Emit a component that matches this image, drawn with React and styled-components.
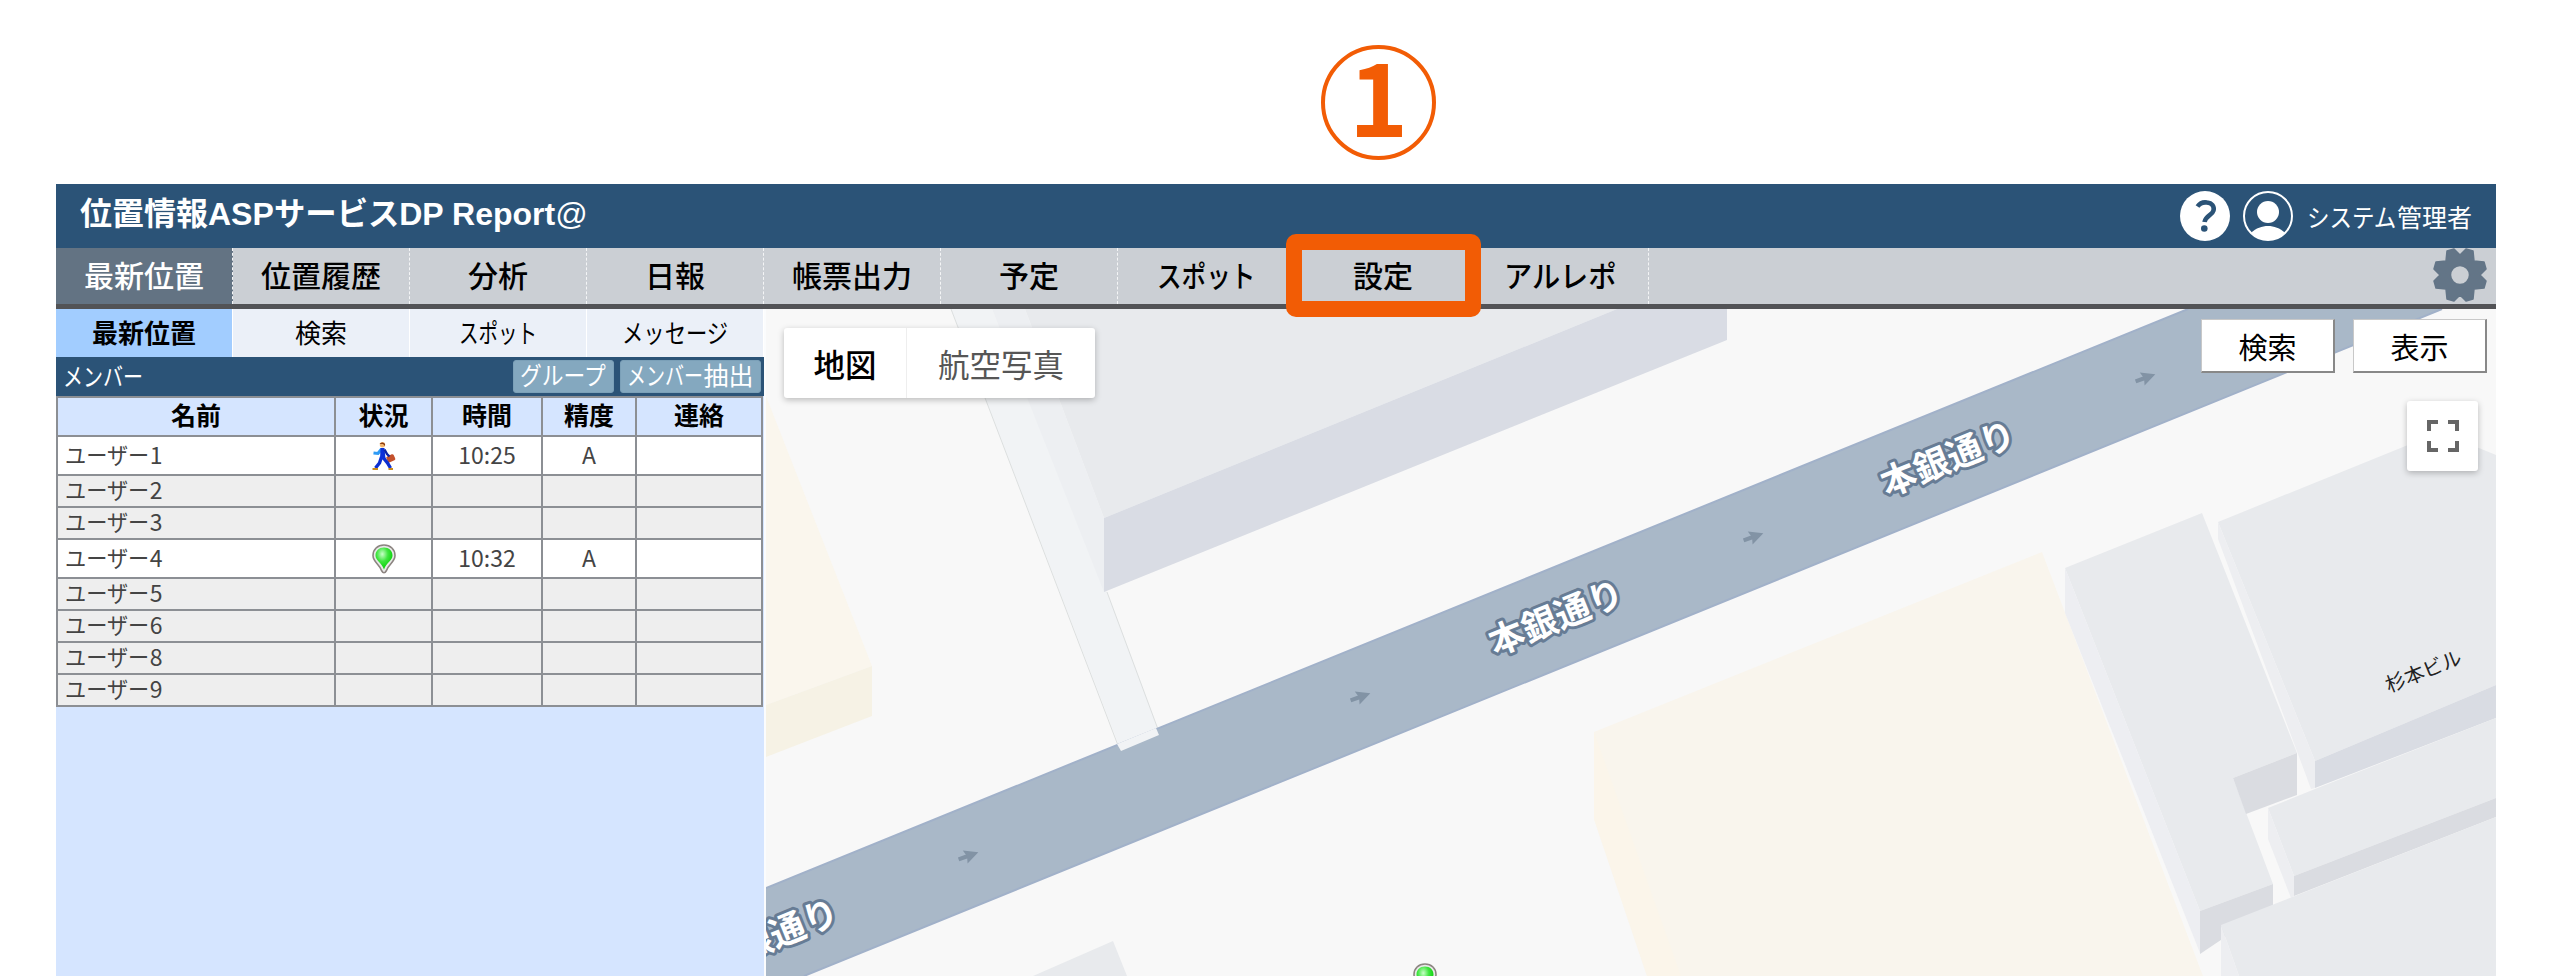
import React from 'react';
import styled, { createGlobalStyle, css } from 'styled-components';

const GlobalStyle = createGlobalStyle`
  * {
    box-sizing: border-box;
  }

  body {
    margin: 0;
    background: #ffffff;
    font-family: 'Noto Sans CJK JP', sans-serif;
    color: #000000;
  }
`;

const Page = styled.div`
  position: relative;
  height: 976px;
  padding: 184px 64px 0 56px;
  overflow: hidden;
`;

const Frame = styled.div`
  display: flex;
  flex-direction: column;
  height: 792px;
`;

const Header = styled.header`
  display: flex;
  align-items: center;
  justify-content: space-between;
  flex: none;
  height: 64px;
  padding: 0 24px;
  background: #2b5377;
  color: #ffffff;
`;

const Title = styled.h1`
  margin: 0 0 4px;
  font-family: 'Liberation Sans', 'Noto Sans CJK JP', sans-serif;
  font-size: 32px;
  font-weight: 700;
  line-height: 1;
`;

const TitleMark = styled.span`
  font-weight: 400;
`;

const Account = styled.div`
  display: flex;
  align-items: center;
  gap: 13px;
  padding-bottom: 1px;
`;

const UserName = styled.span`
  margin-left: 1px;
  padding-top: 2px;
  font-size: 25px;
  line-height: 1;
  white-space: nowrap;
`;

// Proportional kana: the glyphs and the box shrink together
const KanaBox = styled.span`
  display: inline-block;
  width: ${({ $length, $scale }) => $length * $scale}em;
  white-space: nowrap;
`;

const KanaText = styled.span`
  display: inline-block;
  transform: scaleX(${({ $scale }) => $scale});
  transform-origin: left center;
`;

const Kana = ({ scale, children }) => (
  <KanaBox $length={children.length} $scale={scale}>
    <KanaText $scale={scale}>{children}</KanaText>
  </KanaBox>
);

const Nav = styled.nav`
  display: flex;
  flex: none;
  height: 61px;
  background: #cbcfd4;
  border-bottom: 5px solid #525356;
`;

const NavItem = styled.a`
  display: flex;
  align-items: center;
  justify-content: center;
  width: 177px;
  padding-bottom: 4px;
  border-right: 1px dashed #f4f5f6;
  font-size: 30px;
  font-weight: 500;

  ${({ $active }) =>
    $active &&
    css`
      background: #637383;
      color: #ffffff;
    `}
`;

const NavEnd = styled.div`
  display: flex;
  flex: 1;
  justify-content: flex-end;
  padding-right: 9px;
`;

const Body = styled.div`
  display: flex;
  flex: 1;
  min-height: 0;
`;

const Sidebar = styled.aside`
  flex: none;
  width: 708px;
  background: #d5e5ff;
`;

const Tabs = styled.div`
  display: flex;
  height: 48px;
`;

const Tab = styled.a`
  display: flex;
  flex: 1;
  align-items: center;
  justify-content: center;
  padding-bottom: 4px;
  border-right: 1px solid #ffffff;
  background: ${({ $active }) => ($active ? '#a2cdff' : '#ebf0f8')};
  font-size: 26px;
  font-weight: ${({ $active }) => ($active ? 700 : 400)};
`;

const MemberBar = styled.div`
  display: flex;
  align-items: center;
  gap: 6px;
  height: 39px;
  padding: 0 3px 0 7px;
  background: #2b5377;
  color: #ffffff;
  font-size: 25px;
`;

const MemberTitle = styled.span`
  flex: 1;
  padding-bottom: 3px;
  line-height: 1;
`;

const MemberButton = styled.button`
  width: ${({ $width }) => $width}px;
  height: 33px;
  padding: 0 0 4px;
  border: 1px solid #7ba0b8;
  border-radius: 3px;
  background: #84a8bf;
  color: #ffffff;
  font: inherit;
  line-height: 1;
  white-space: nowrap;
`;

const MemberTable = styled.table`
  width: 706px;
  border-collapse: collapse;
  table-layout: fixed;
  font-size: 23px;
  line-height: 1;
`;

const HeadCell = styled.th`
  width: ${({ $width }) => $width}px;
  height: 39px;
  padding: 0 0 4px;
  border: 2px solid #8c8f94;
  background: #d5e5ff;
  font-size: 25px;
  font-weight: 700;
`;

const Row = styled.tr`
  height: ${({ $online }) => ($online ? 39 : 32)}px;
  background: ${({ $online }) => ($online ? '#ffffff' : '#eeeeee')};
`;

const Cell = styled.td`
  padding: 0 0 3px ${({ $name }) => ($name ? 7 : 0)}px;
  border: 2px solid #8c8f94;
  color: #444444;
  text-align: ${({ $name }) => ($name ? 'left' : 'center')};
  vertical-align: middle;

  svg {
    display: block;
    margin: 3px auto 0;
  }
`;

const MapArea = styled.main`
  position: relative;
  flex: 1;
  border-left: 2px solid #fbfcfd;
  background: #f8f8f8;
  overflow: hidden;
`;

const MapCanvas = styled.svg`
  display: block;
`;

const RoadLabel = styled.text`
  fill: #ffffff;
  stroke: #677c95;
  stroke-width: 6px;
  stroke-linejoin: round;
  paint-order: stroke;
  font-size: 35.5px;
  font-weight: 700;
  text-anchor: middle;
  dominant-baseline: central;
`;

const PlaceLabel = styled.text`
  fill: #222222;
  font-size: 20px;
  text-anchor: middle;
  dominant-baseline: central;
`;

const MapControls = styled.div`
  position: absolute;
  inset: 10px 9px auto 18px;
  display: flex;
  align-items: flex-start;
  justify-content: space-between;
`;

const MapTypes = styled.div`
  display: flex;
  height: 70px;
  margin-top: 9px;
  border-radius: 3px;
  background: #ffffff;
  box-shadow: 0 2px 6px rgba(0, 0, 0, 0.25);
`;

const MapType = styled.button`
  width: ${({ $width }) => $width}px;
  padding: 0;
  border: 0;
  border-left: ${({ $active }) => ($active ? '0' : '1px solid #eeeeee')};
  background: none;
  color: ${({ $active }) => ($active ? '#000000' : '#565656')};
  font-family: inherit;
  font-size: 31.5px;
  font-weight: ${({ $active }) => ($active ? 500 : 400)};
`;

const MapActions = styled.div`
  display: grid;
  grid-template-columns: 134px 134px;
  gap: 28px 18px;
  justify-items: end;
`;

const MapButton = styled.button`
  width: 134px;
  height: 54px;
  padding: 0;
  border: 1px solid #c8c8c8;
  border-right: 2px solid #888888;
  border-bottom: 2px solid #888888;
  background: #ffffff;
  font-family: inherit;
  font-size: 29px;
`;

const FullscreenButton = styled.button`
  display: flex;
  grid-column: 2;
  align-items: center;
  justify-content: center;
  width: 71px;
  height: 70px;
  margin-right: 9px;
  padding: 0;
  border: 0;
  border-radius: 3px;
  background: #ffffff;
  box-shadow: 0 2px 6px rgba(0, 0, 0, 0.25);
`;

const StepNumber = styled.div`
  position: absolute;
  top: 45px;
  left: 1321px;
  display: flex;
  align-items: center;
  justify-content: center;
  width: 115px;
  height: 115px;
  padding-bottom: 18px;
  border: 4px solid #f25c05;
  border-radius: 50%;
  color: #f25c05;
  font-size: 101px;
  font-weight: 700;
  line-height: 1;
`;

const StepFrame = styled.div`
  position: absolute;
  top: 234px;
  left: 1286px;
  width: 195px;
  height: 83px;
  border: 16px solid #f25c05;
  border-radius: 10px;
`;

const HelpIcon = () => (
  <svg width="50" height="50" viewBox="0 0 50 50">
    <circle cx="25" cy="25" r="25" fill="#fff" />
    <path
      d="M17.5 15.5C20 12 24 11 27 11.5C32 12 34.500 15.500 33.500 19.500C32.500 24 25.500 24.500 24.500 31"
      fill="none"
      stroke="#2b5377"
      strokeWidth="4.6"
    />
    <circle cx="24.3" cy="37.5" r="3.3" fill="#2b5377" />
  </svg>
);

const UserIcon = () => (
  <svg width="50" height="50" viewBox="0 0 50 50">
    <circle cx="25" cy="25" r="24" fill="none" stroke="#fff" strokeWidth="2" />
    <circle cx="25" cy="21" r="11" fill="#fff" />
    <path d="M8 42C13 37 19 35 25 35S37 37 42 42A24.5 24.5 0 0 1 8 42Z" fill="#fff" />
  </svg>
);

const GearIcon = () => (
  <svg width="54" height="54" viewBox="-27 -27 54 54">
    <path
      d="M0 -20L6 -26L13 -24L14 -14L24 -13L26 -6L20 0L26 6L24 13L14 14L13 24L6 26L0 20L-6 26L-13 24L-14 14L-24 13L-26 6L-20 0L-26 -6L-24 -13L-14 -14L-13 -24L-6 -26ZM0 -9.500A9.500 9.500 0 1 0 0 9.500A9.500 9.500 0 1 0 0 -9.500Z"
      fill="#637587"
      stroke="#637587"
      strokeWidth="1.5"
      strokeLinejoin="round"
      fillRule="evenodd"
    />
  </svg>
);

const FullscreenIcon = () => (
  <svg width="32" height="32" viewBox="0 0 32 32" fill="none" stroke="#666" strokeWidth="4">
    <path d="M2 11V2H11M21 2H30V11M30 21V30H21M11 30H2V21" />
  </svg>
);

const WalkIcon = () => (
  <svg width="24" height="30" viewBox="0 0 24 30">
    <rect x="15" y="14.5" width="8" height="6.5" rx="1.5" fill="#c4512c" transform="rotate(-25 18 18)" />
    <path d="M9.500 16L7.500 22L3.500 27M11.500 17L15.500 22L18.500 27" fill="none" stroke="#0c2fd0" strokeWidth="3.4" />
    <path d="M9.500 8L6 12.500L1.500 12" fill="none" stroke="#2f9bf5" strokeWidth="3" />
    <path d="M8.500 7H12.500L13.500 18H8Z" fill="#0a2fd8" />
    <path d="M12.500 8.500L15 13L17.500 15.500" fill="none" stroke="#0a22a8" strokeWidth="2.4" />
    <circle cx="10.5" cy="3.8" r="2.7" fill="#f2b46c" />
    <path d="M7.500 3A3.200 3.200 0 0 1 13 3V5L11 3Z" fill="#8a3b12" />
    <path d="M0.500 28H6M16.500 28H21" stroke="#c98a1a" strokeWidth="2.2" />
  </svg>
);

const PinIcon = ({ x, y }) => (
  <svg x={x} y={y} width="24" height="30" viewBox="0 0 24 30">
    <defs>
      <radialGradient id="pin" cx="0.4" cy="0.3" r="0.6">
        <stop offset="0" stopColor="#c8ffc8" />
        <stop offset="0.55" stopColor="#3fe63f" />
        <stop offset="1" stopColor="#12d412" />
      </radialGradient>
    </defs>
    <path
      d="M12 1C5.500 1 1 5.500 1 11.500C1 18 7.500 20 9.500 26.500Q12 31 14.500 26.500C16.500 20 23 18 23 11.500C23 5.500 18.500 1 12 1Z"
      fill="#e8e8e8"
      stroke="#8c8480"
      strokeWidth="1.6"
    />
    <path
      d="M12 3.500C7 3.500 3.500 7 3.500 11.500C3.500 16.500 9.500 18.500 12 25.500C14.500 18.500 20.500 16.500 20.500 11.500C20.500 7 17 3.500 12 3.500Z"
      fill="url(#pin)"
    />
  </svg>
);

const navItems = [
  { label: '最新位置', active: true },
  { label: '位置履歴' },
  { label: '分析' },
  { label: '日報' },
  { label: '帳票出力' },
  { label: '予定' },
  { label: 'スポット', kana: 0.82 },
  { label: '設定' },
  { label: 'アルレポ', kana: 0.94 },
];

const tabs = [
  { label: '最新位置', active: true },
  { label: '検索' },
  { label: 'スポット', kana: 0.75 },
  { label: 'メッセージ', kana: 0.82 },
];

const columns = [
  { label: '名前', width: 278 },
  { label: '状況', width: 97 },
  { label: '時間', width: 110 },
  { label: '精度', width: 94 },
  { label: '連絡', width: 126 },
];

const members = [
  { id: 1, icon: <WalkIcon />, time: '10:25', accuracy: 'A' },
  { id: 2 },
  { id: 3 },
  { id: 4, icon: <PinIcon />, time: '10:32', accuracy: 'A' },
  { id: 5 },
  { id: 6 },
  { id: 8 },
  { id: 9 },
];

const buildings = [
  // beige block on the left
  { fill: '#faf6ed', points: '766,396 872,666 766,705' },
  { fill: '#f6f2e5', points: '872,666 872,716 766,757 766,705' },
  // large building north of the street
  { fill: '#edeff2', points: '992,309 1025,309 1104,518 1104,592' },
  { fill: '#e8eaed', points: '1025,309 1617,309 1104,518' },
  { fill: '#d9dce4', points: '1104,518 1617,309 1727,309 1727,340 1104,592' },
  // beige block south of the street
  { fill: '#f9f5ed', points: '1594,732 2042,552 2203,976 1647,976 1594,819' },
  { fill: '#fbf5ea', points: '1594,732 1594,819 1647,976 1681,976' },
  // right hand buildings
  { fill: '#e8eaed', points: '2065,568 2202,513 2297,753 2233,778 2273,884 2200,911' },
  { fill: '#edeef2', points: '2065,568 2065,613 2200,953 2200,911' },
  { fill: '#dadce1', points: '2297,753 2297,795 2246,814 2233,778' },
  { fill: '#dadce1', points: '2273,884 2273,905 2200,954 2200,911' },
  { fill: '#e8eaed', points: '2218,522 2440,432 2496,455 2496,685 2315,761' },
  { fill: '#edeef1', points: '2218,522 2218,539 2311,789 2315,788 2315,761' },
  { fill: '#d9dce3', points: '2315,761 2496,685 2496,718 2315,788' },
  { fill: '#e8eaed', points: '2268,808 2315,789 2496,718 2496,798 2294,876' },
  { fill: '#edeef1', points: '2268,808 2268,839 2291,898 2294,896 2294,876' },
  { fill: '#dadce1', points: '2294,876 2496,798 2496,817 2294,896' },
  { fill: '#e8eaed', points: '2221,925 2496,817 2496,976 2239,976' },
  { fill: '#edeef1', points: '2221,925 2221,976 2239,976' },
  { fill: '#e8eaed', points: '1113,941 1127,976 1033,976' },
];

const roadLabels = [
  [770, 934],
  [1555, 615],
  [1947, 456],
];

const arrows = [
  [968, 856],
  [1360, 697],
  [1753, 537],
  [2145, 378],
];

const StreetMap = () => (
  <MapCanvas width="1730" height="667" viewBox="766 309 1730 667">
    <polygon points="951,309 992,309 1107,592 1159,732 1121,751" fill="#f1f3f5" />
    <path d="M951 309L1119 748M1107 592L1159 732" fill="none" stroke="#dcdfdf" />
    {buildings.map((building) => (
      <polygon key={building.points} points={building.points} fill={building.fill} />
    ))}
    <polygon points="766,888 2188,309 2442,309 804,976 766,976" fill="#a9b8c8" />
    <path d="M766 888L2188 309M2442 309L804 976" stroke="#a1b1c9" strokeWidth="2" />
    <polygon points="1117,744 1121,751 1159,735 1156,728" fill="#f1f3f5" />
    {arrows.map(([x, y]) => (
      <g key={x} transform={`translate(${x} ${y}) rotate(-20)`} fill="#8293a5">
        <path d="M-10 -2H0V2H-10Z" />
        <path d="M-3 -7L11 0L-3 7L-1 0Z" />
      </g>
    ))}
    {roadLabels.map(([x, y]) => (
      <RoadLabel key={x} transform={`translate(${x} ${y}) rotate(-22)`}>
        本銀通り
      </RoadLabel>
    ))}
    <PlaceLabel transform="translate(2423 670) rotate(-22)">杉本ビル</PlaceLabel>
    <PinIcon x="1413" y="963" />
  </MapCanvas>
);

const App = () => (
  <>
    <GlobalStyle />
    <Page>
      <Frame>
        <Header>
          <Title>
            位置情報ASP<Kana scale={0.98}>サービス</Kana>DP Report<TitleMark>@</TitleMark>
          </Title>
          <Account>
            <HelpIcon />
            <UserIcon />
            <UserName>
              <Kana scale={0.9}>システム</Kana>管理者
            </UserName>
          </Account>
        </Header>
        <Nav>
          {navItems.map((item) => (
            <NavItem key={item.label} $active={item.active}>
              {item.kana ? <Kana scale={item.kana}>{item.label}</Kana> : item.label}
            </NavItem>
          ))}
          <NavEnd>
            <GearIcon />
          </NavEnd>
        </Nav>
        <Body>
          <Sidebar>
            <Tabs>
              {tabs.map((tab) => (
                <Tab key={tab.label} $active={tab.active}>
                  {tab.kana ? <Kana scale={tab.kana}>{tab.label}</Kana> : tab.label}
                </Tab>
              ))}
            </Tabs>
            <MemberBar>
              <MemberTitle>
                <Kana scale={0.8}>メンバー</Kana>
              </MemberTitle>
              <MemberButton $width={101}>
                <Kana scale={0.87}>グループ</Kana>
              </MemberButton>
              <MemberButton $width={141}>
                <Kana scale={0.76}>メンバー</Kana>抽出
              </MemberButton>
            </MemberBar>
            <MemberTable>
              <thead>
                <tr>
                  {columns.map((column) => (
                    <HeadCell key={column.label} $width={column.width}>
                      {column.label}
                    </HeadCell>
                  ))}
                </tr>
              </thead>
              <tbody>
                {members.map((member) => (
                  <Row key={member.id} $online={Boolean(member.time)}>
                    <Cell $name>
                      <Kana scale={0.92}>ユーザー</Kana>
                      {member.id}
                    </Cell>
                    <Cell>{member.icon}</Cell>
                    <Cell>{member.time}</Cell>
                    <Cell>{member.accuracy}</Cell>
                    <Cell />
                  </Row>
                ))}
              </tbody>
            </MemberTable>
          </Sidebar>
          <MapArea>
            <StreetMap />
            <MapControls>
              <MapTypes>
                <MapType $active $width={122}>
                  地図
                </MapType>
                <MapType $width={189}>航空写真</MapType>
              </MapTypes>
              <MapActions>
                <MapButton>検索</MapButton>
                <MapButton>表示</MapButton>
                <FullscreenButton>
                  <FullscreenIcon />
                </FullscreenButton>
              </MapActions>
            </MapControls>
          </MapArea>
        </Body>
      </Frame>
      <StepNumber>1</StepNumber>
      <StepFrame />
    </Page>
  </>
);

export default App;
